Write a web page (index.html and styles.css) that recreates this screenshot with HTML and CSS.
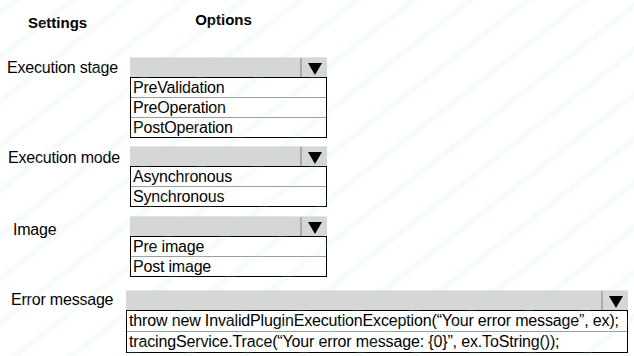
FILE: index.html
```html
<!DOCTYPE html>
<html lang="en">
<head>
    <meta charset="UTF-8">
    <title>Plug-in step settings</title>
    <link rel="stylesheet" href="styles.css">
</head>
<body>
    <div class="sheet">
        <!-- Column headings -->
        <div class="heads">
            <span class="head head-settings">Settings</span>
            <span class="head head-options">Options</span>
        </div>

        <div class="setting setting-stage">
            <div class="label">Execution stage</div>
            <div class="picker">
                <div class="dropdown"><span class="dropdown-arrow"></span></div>
                <ul class="choices">
                    <li>PreValidation</li>
                    <li>PreOperation</li>
                    <li>PostOperation</li>
                </ul>
            </div>
        </div>

        <div class="setting setting-mode">
            <div class="label">Execution mode</div>
            <div class="picker">
                <div class="dropdown"><span class="dropdown-arrow"></span></div>
                <ul class="choices">
                    <li>Asynchronous</li>
                    <li>Synchronous</li>
                </ul>
            </div>
        </div>

        <div class="setting setting-image">
            <div class="label">Image</div>
            <div class="picker">
                <div class="dropdown"><span class="dropdown-arrow"></span></div>
                <ul class="choices">
                    <li>Pre image</li>
                    <li>Post image</li>
                </ul>
            </div>
        </div>

        <div class="setting setting-error">
            <div class="label">Error message</div>
            <div class="picker picker-wide">
                <div class="dropdown"><span class="dropdown-arrow"></span></div>
                <ul class="choices choices-code">
                    <li>throw new InvalidPluginExecutionException(“Your error message”, ex);</li>
                    <li>tracingService.Trace(“Your error message: {0}”, ex.ToString());</li>
                </ul>
            </div>
        </div>

        <!-- faint diagonal watermark over the whole sheet -->
        <div class="watermark"></div>
    </div>
</body>
</html>
```

FILE: styles.css
```css
body {
    margin: 0;
    background-color: #ffffff;
    font-family: 'Liberation Sans', Arial, sans-serif;
    color: #000000;
}
.sheet {
    position: relative;
    width: 634px;
    height: 356px;
    overflow: hidden;
}
.heads {
    display: flex;
    align-items: flex-start;
    height: 42px;
}
.head {
    font-size: 15px;
    font-weight: bold;
}
.head-settings {
    margin-top: 14px;
    margin-left: 28px;
}
.head-options {
    margin-top: 11px;
    margin-left: 108px;
}
.setting {
    display: flex;
    align-items: flex-start;
}
.label {
    width: 130px;
    font-size: 16px;
    line-height: 20px;
    letter-spacing: -0.2px;
}
.setting-stage { margin-top: 15px; }
.setting-stage .label { padding-left: 7px; width: 123px; padding-top: 1px; }
.setting-mode { margin-top: 8px; }
.setting-mode .label { padding-left: 8px; width: 122px; padding-top: 2px; }
.setting-image { margin-top: 9px; }
.setting-image .label { padding-left: 13px; width: 117px; padding-top: 4px; }
.setting-error { margin-top: 13px; }
.setting-error .label { padding-left: 11px; width: 117px; }
.picker {
    width: 197px;
}
.picker-wide {
    width: 502px;
    margin-left: -2px;
}
.dropdown {
    display: flex;
    justify-content: flex-end;
    height: 19px;
    background-color: #d6d6d6;
    border-top: 1px solid #e4e4e4;
}
.dropdown-arrow {
    width: 25px;
    border-left: 2px solid #a9a9a9;
    display: flex;
    align-items: center;
    justify-content: center;
}
.dropdown-arrow::after {
    content: "";
    border-left: 7px solid transparent;
    border-right: 7px solid transparent;
    border-top: 12px solid #000000;
    margin-top: 2px;
}
.choices {
    list-style: none;
    margin: 0;
    padding: 0;
    border: 1px solid #000000;
}
.choices li {
    font-size: 16px;
    line-height: 19px;
    height: 19px;
    padding-left: 2px;
    letter-spacing: -0.2px;
    white-space: nowrap;
}
.choices li + li {
    border-top: 1px solid #9c9c9c;
}
.choices-code li {
    height: 20px;
    line-height: 20px;
    letter-spacing: -0.15px;
}
.watermark {
    position: absolute;
    inset: 0;
    pointer-events: none;
    background-image: repeating-linear-gradient(
        -38deg,
        rgba(255, 255, 255, 0) 0px,
        rgba(255, 255, 255, 0) 27px,
        rgba(170, 228, 236, 0.14) 29px,
        rgba(214, 232, 150, 0.12) 31px,
        rgba(170, 228, 236, 0.14) 33px,
        rgba(255, 255, 255, 0) 35px
    );
}
```
